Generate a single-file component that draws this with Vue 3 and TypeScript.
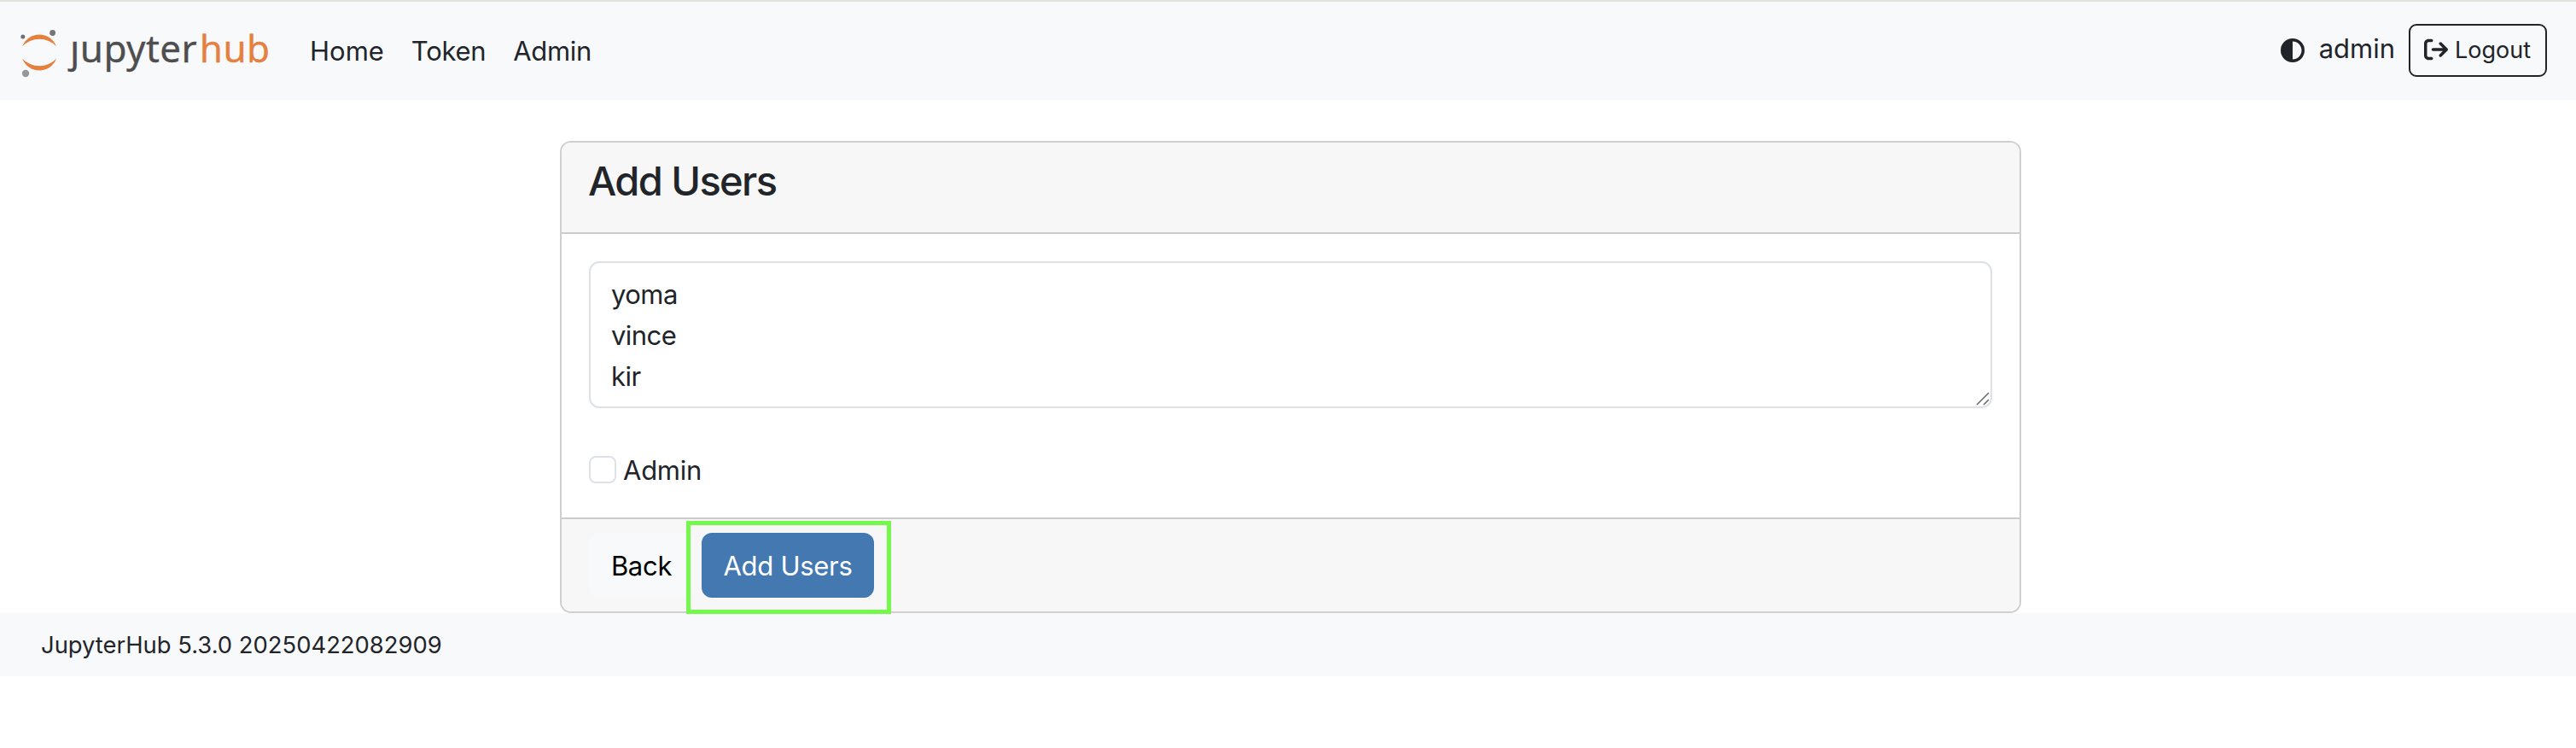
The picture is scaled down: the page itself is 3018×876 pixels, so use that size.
<script setup lang="ts">
import { ref } from 'vue'

const links = ['Home', 'Token', 'Admin']
const usernames = ref('yoma\nvince\nkir')
const isAdmin = ref(false)
</script>

<template>
  <div class="page">
    <nav class="navbar">
      <a class="brand">
        <svg width="300" height="100" viewBox="20 9 300 100" role="img" aria-label="jupyterhub">
          <defs>
            <clipPath id="dotless">
              <path d="M96 9H320V109H70V47.5H96Z" />
            </clipPath>
          </defs>
          <g fill="#e5803e">
            <path d="M26.2 54.3A21.3 21.3 0 0 1 66 54.3A27.5 27.5 0 0 0 26.2 54.3Z" />
            <path d="M26.2 68.7A21.3 21.3 0 0 0 66 68.7A27.5 27.5 0 0 1 26.2 68.7Z" />
          </g>
          <circle cx="26.8" cy="43" r="2.5" fill="#6f7070" />
          <circle cx="61.6" cy="38.5" r="3.4" fill="#767677" />
          <circle cx="30" cy="86" r="4.2" fill="#989798" />
          <g clip-path="url(#dotless)">
            <text class="word jupyter" x="82" y="73">jupyter</text>
          </g>
          <text class="word hub" x="233.8" y="73">hub</text>
        </svg>
      </a>
      <div class="links">
        <a v-for="link in links" :key="link" :class="['link', link.toLowerCase()]">{{ link }}</a>
      </div>
      <div class="session">
        <svg class="theme" width="28" height="28" viewBox="0 0 512 512">
          <path d="M448 256c0-106-86-192-192-192V448c106 0 192-86 192-192zM0 256a256 256 0 1 1 512 0A256 256 0 1 1 0 256z" />
        </svg>
        <span class="user">admin</span>
        <a class="logout">
          <svg width="28" height="28" viewBox="0 0 512 512">
            <path d="M502.6 278.6c12.5-12.5 12.5-32.8 0-45.3l-128-128c-12.5-12.5-32.8-12.5-45.3 0s-12.5 32.8 0 45.3L402.7 224 192 224c-17.7 0-32 14.3-32 32s14.3 32 32 32l210.7 0-73.4 73.4c-12.5 12.5-12.5 32.8 0 45.3s32.8 12.5 45.3 0l128-128zM160 96c17.7 0 32-14.3 32-32s-14.3-32-32-32L96 32C43 32 0 75 0 128L0 384c0 53 43 96 96 96l64 0c17.7 0 32-14.3 32-32s-14.3-32-32-32l-64 0c-17.7 0-32-14.3-32-32l0-256c0-17.7 14.3-32 32-32l64 0z" />
          </svg>
          <span>Logout</span>
        </a>
      </div>
    </nav>

    <main class="card">
      <header class="card-header"><h3>Add Users</h3></header>
      <section class="card-body">
        <div class="field">
          <textarea v-model="usernames" rows="3" spellcheck="false"></textarea>
          <svg class="grip" width="16" height="16" viewBox="0 0 16 16">
            <path d="M1 15L15 1M9 15L15 9" />
          </svg>
        </div>
        <label class="check">
          <input v-model="isAdmin" type="checkbox" />
          <span>Admin</span>
        </label>
      </section>
      <footer class="card-footer">
        <button class="btn light">Back</button>
        <div class="target">
          <button class="btn primary">Add Users</button>
        </div>
      </footer>
    </main>

    <footer class="version">JupyterHub 5.3.0 20250422082909</footer>
  </div>
</template>

<style>
body {
  margin: 0;
  background: #fff;
}
</style>

<style scoped>
.page {
  font-family: Inter, "Liberation Sans", sans-serif;
  font-size: 31px;
  line-height: 48px;
  color: #212529;
}
.page *,
.page {
  box-sizing: border-box;
}
.navbar {
  display: flex;
  align-items: center;
  height: 117px;
  padding: 0 34px 1px 20px;
  border-top: 2px solid #e1e3dc;
  background: #f8f9fb;
}
.brand {
  display: flex;
}
.brand svg {
  display: block;
}
.word {
  font-family: "Noto Sans", "Open Sans", sans-serif;
  font-size: 44px;
}
.jupyter {
  fill: #4e4e4e;
  stroke: #4e4e4e;
  stroke-width: 0.3;
  letter-spacing: 0.45px;
}
.hub {
  fill: #e5803e;
  stroke: #e5803e;
  stroke-width: 0.3;
  letter-spacing: 0.4px;
}
.links {
  display: flex;
  gap: 32px;
  margin: 1px 0 0 43px;
}
.link.token,
.link.admin {
  letter-spacing: -0.3px;
}
.session {
  display: flex;
  align-items: center;
  margin-left: auto;
}
.session svg {
  display: block;
  fill: #212529;
}
.theme {
  margin-right: 17px;
}
.user {
  margin: -4px 16px 0 0;
}
.logout {
  display: flex;
  align-items: center;
  gap: 8px;
  width: 162px;
  height: 62px;
  padding-left: 16px;
  border: 2px solid #212529;
  border-radius: 9px;
  font-size: 27px;
}
.logout svg {
  margin-top: -2px;
}
.card {
  width: 1712px;
  height: 553px;
  margin: 48px 0 0 656px;
  border: 2px solid #cfcfcf;
  border-radius: 13px;
}
.card-header {
  height: 107px;
  padding: 16px 32px;
  border-bottom: 2px solid #cbcbcb;
  border-radius: 11px 11px 0 0;
  background: #f7f7f7;
}
h3 {
  margin: 0 0 0 -1px;
  font-size: 47px;
  font-weight: 500;
  line-height: 58px;
  letter-spacing: -1.6px;
}
.card-body {
  height: 332px;
  padding: 32px;
}
.field {
  position: relative;
  height: 172px;
}
textarea {
  display: block;
  width: 100%;
  height: 172px;
  padding: 13px 24px 10px;
  border: 2px solid #dee2e6;
  border-radius: 12px;
  background: #fff;
  color: inherit;
  font: inherit;
  letter-spacing: -0.55px;
  resize: none;
  overflow: hidden;
  outline: none;
}
.grip {
  position: absolute;
  right: 3px;
  bottom: 3px;
  fill: none;
  stroke: #666;
  stroke-width: 1.5;
}
.check {
  display: flex;
  align-items: center;
  gap: 8px;
  height: 48px;
  margin-top: 48px;
  letter-spacing: -0.25px;
}
.check span {
  padding-top: 2px;
}
.check input {
  appearance: none;
  width: 32px;
  height: 32px;
  margin: 0;
  border: 2px solid #dee2e6;
  border-radius: 8px;
  background: #fff;
}
.card-footer {
  display: flex;
  gap: 8px;
  height: 110px;
  padding: 16px 32px;
  border-top: 2px solid #cbcbcb;
  border-radius: 0 0 11px 11px;
  background: #f7f7f7;
}
.btn {
  height: 76px;
  padding: 2px 0 0;
  border: 0;
  border-radius: 12px;
  font: inherit;
  letter-spacing: -0.3px;
}
.light {
  width: 124px;
  padding-right: 1px;
  background: #f8f9fa;
  color: #000;
}
.primary {
  width: 202px;
  background: #4478b1;
  color: #fff;
}
.target {
  position: relative;
  height: 76px;
}
.target::after {
  content: "";
  position: absolute;
  inset: -14px -20px -19px -18px;
  border: 5.5px solid #74f84b;
}
.version {
  height: 74px;
  padding: 0 48px;
  background: #f8f9fb;
  font-size: 27.4px;
  line-height: 74px;
}
</style>
